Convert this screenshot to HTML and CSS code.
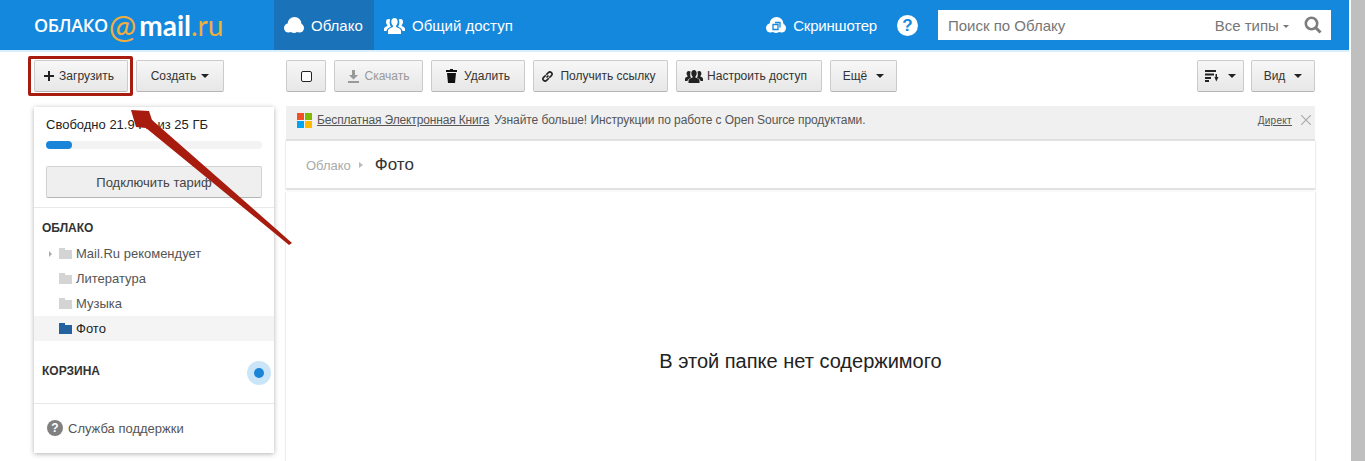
FILE: index.html
```html
<!DOCTYPE html>
<html lang="en">
<head>
    <meta charset="UTF-8">
    <title>Облако Mail.Ru</title>
    <link rel="stylesheet" href="styles.css">
</head>
<body>
    <div class="page">
        <div class="header">
            <div class="logo"><span class="logo-word">ОБЛАКО</span><span class="logo-at">@</span><b>mail</b><span class="logo-ru">.ru</span></div>
            <a class="tab tab-active">
                <svg width="20" height="16" viewBox="0 0 20 16"><circle cx="4.500" cy="11" r="4.500" fill="#fff"/><circle cx="10.500" cy="7" r="7" fill="#fff"/><circle cx="15.500" cy="11" r="4.500" fill="#fff"/><circle cx="10" cy="12.500" r="3.500" fill="#fff"/></svg>
                Облако
            </a>
            <a class="tab">
                <svg width="21" height="17" viewBox="0 0 21 17"><path fill="#fff" d="M10.500 1C8.500 1 7.300 2.500 7.300 4.700c0 1.700.7 3.100 1.600 3.900v1.300C6.500 10.700 4 11.800 4 13.500V17h13v-3.500c0-1.700-2.500-2.800-4.900-3.600V8.600c.9-.8 1.600-2.200 1.600-3.900C13.700 2.500 12.500 1 10.500 1zM4.500 2C3 2 2 3.200 2 5c0 1.300.6 2.400 1.300 3v1C1.500 9.600 0 10.500 0 11.800V14h2.600c.2-2 2-3.200 4.400-4.200-.7-.9-1.100-2-1.300-3.200C5.600 5 5.800 3.500 6.300 2.600 5.900 2.200 5.200 2 4.500 2zm12 0c-.7 0-1.400.2-1.800.6.5.9.7 2.400.6 4-.2 1.200-.6 2.300-1.300 3.200 2.400 1 4.200 2.200 4.400 4.200H21v-2.200c0-1.300-1.500-2.200-3.300-2.800V8c.7-.6 1.300-1.700 1.300-3 0-1.800-1-3-2.500-3z"/></svg>
                Общий доступ
            </a>
            <a class="tab tab-right">
                <svg width="20" height="16" viewBox="0 0 20 16"><circle cx="4.500" cy="11" r="4.500" fill="#fff"/><circle cx="10.500" cy="7" r="7" fill="#fff"/><circle cx="15.500" cy="11" r="4.500" fill="#fff"/><circle cx="10" cy="12.500" r="3.500" fill="#fff"/><path fill="none" stroke="#1488dc" stroke-width="1.300" d="M7 7.500h5v5H7zM9 5.500h5v5"/></svg>
                Скриншотер
            </a>
            <div class="help-round">?</div>
            <div class="search">
                <span class="search-text">Поиск по Облаку</span>
                <span class="search-type">Все типы <i class="caret caret-small"></i></span>
                <svg class="search-icon" width="18" height="18" viewBox="0 0 18 18"><circle cx="7.500" cy="7.500" r="5.700" fill="none" stroke="#7d7d7d" stroke-width="2.600"/><path stroke="#7d7d7d" stroke-width="3" d="M11.500 11.500l5 5"/></svg>
            </div>
        </div>

        <div class="toolbar">
            <div class="toolbar-left">
                <button class="btn btn-upload"><svg width="10" height="10" viewBox="0 0 10 10"><path fill="#222" d="M4 0h2v4h4v2H6v4H4V6H0V4h4z"/></svg>Загрузить</button>
                <button class="btn btn-create">Создать<i class="caret"></i></button>
            </div>
            <button class="btn btn-check"><i class="checkbox"></i></button>
            <button class="btn btn-download btn-disabled"><svg width="11" height="13" viewBox="0 0 11 13"><path fill="#999" d="M4 0h3v5h3L5.500 9.500 1 5h3zM0 11h11v2H0z"/></svg>Скачать</button>
            <button class="btn btn-delete"><svg width="11" height="14" viewBox="0 0 11 14"><path fill="#111" d="M4 0h3v1h4v2H0V1h4zM1 4h9l-1 10H2z"/></svg>Удалить</button>
            <button class="btn btn-link"><svg width="13" height="13" viewBox="0 0 13 13"><path fill="none" stroke="#222" stroke-width="1.600" d="M5.500 7.500l2-2M4.800 5.200L2.600 7.400a2 2 0 0 0 3 3l2.200-2.200M8.200 7.800l2.200-2.200a2 2 0 0 0-3-3L5.200 4.800"/></svg>Получить ссылку</button>
            <button class="btn btn-share"><svg width="18" height="13" viewBox="0 0 18 13"><path fill="#222" d="M9 0C7.300 0 6.300 1.300 6.300 3.200c0 1.400.6 2.600 1.300 3.300v1C5.500 8.200 3.500 9.200 3.500 10.600V13h11v-2.400c0-1.400-2-2.400-4.100-3.100v-1c.7-.7 1.300-1.900 1.300-3.300C11.700 1.300 10.700 0 9 0zM3.600 1C2.400 1 1.600 2 1.600 3.400c0 1 .4 1.900 1 2.400v.8C1.200 7.100 0 7.900 0 8.900V11h2.500c.1-1.300 1.200-2.400 3.500-3.300-.5-.9-.9-2.100-.8-3.500 0-1.100.2-1.800.5-2.500C5.200 1.200 4.500 1 3.600 1zm10.800 0c-.9 0-1.600.2-2.100.7.300.7.500 1.400.5 2.500.1 1.400-.3 2.600-.8 3.500 2.300.9 3.400 2 3.500 3.300H18V8.900c0-1-1.200-1.800-2.600-2.300v-.8c.6-.5 1-1.400 1-2.400C16.400 2 15.600 1 14.400 1z"/></svg>Настроить доступ</button>
            <button class="btn btn-more">Ещё<i class="caret"></i></button>
            <button class="btn btn-sort"><svg width="14" height="12" viewBox="0 0 14 12"><path fill="#222" d="M0 0h11v2H0zM0 3.500h9v2H0zM0 7h6v2H0zM0 10h4v2H0zM9.500 7h1V4h1.500v3h1.500l-2.250 4.500z"/></svg><i class="caret"></i></button>
            <button class="btn btn-view">Вид<i class="caret"></i></button>
        </div>

        <div class="layout">
            <div class="sidebar">
                <div class="quota">
                    <div class="quota-text">Свободно 21.9 ГБ из 25 ГБ</div>
                    <div class="quota-bar"><div class="quota-fill" style="width: 12%"></div></div>
                    <button class="tariff-btn">Подключить тариф</button>
                </div>
                <div class="tree">
                    <div class="tree-title">ОБЛАКО</div>
                    <div class="tree-row"><i class="tree-arrow"></i><i class="folder"></i>Mail.Ru рекомендует</div>
                    <div class="tree-row"><i class="folder"></i>Литература</div>
                    <div class="tree-row"><i class="folder"></i>Музыка</div>
                    <div class="tree-row tree-row-active"><i class="folder folder-active"></i>Фото</div>
                </div>
                <div class="trash">
                    <div class="tree-title">КОРЗИНА</div>
                    <div class="pulse"><i></i></div>
                </div>
                <div class="support"><span class="support-icon">?</span>Служба поддержки</div>
            </div>

            <div class="content">
                <div class="banner">
                    <svg class="ms-logo" width="15" height="15" viewBox="0 0 15 15"><path fill="#f25022" d="M0 0h7v7H0z"/><path fill="#7fba00" d="M8 0h7v7H8z"/><path fill="#00a4ef" d="M0 8h7v7H0z"/><path fill="#ffb900" d="M8 8h7v7H8z"/></svg>
                    <a class="banner-link">Бесплатная Электронная Книга</a>
                    <span class="banner-text">Узнайте больше! Инструкции по работе с Open Source продуктами.</span>
                    <a class="banner-direct">Директ</a>
                    <svg width="10" height="10" viewBox="0 0 10 10"><path stroke="#aaa" stroke-width="1.200" d="M0 0l10 10M10 0L0 10"/></svg>
                </div>
                <div class="crumbs">
                    <span class="crumb">Облако</span>
                    <i class="crumb-arrow"></i>
                    <span class="crumb-current">Фото</span>
                </div>
                <div class="empty">В этой папке нет содержимого</div>
            </div>
        </div>
    </div>
    <div class="scroll-gap"></div>
    <div class="scrollbar"></div>

    <!-- red marks drawn over the screenshot -->
    <div class="mark-box"></div>
    <svg class="mark-arrow" width="300" height="250" viewBox="0 0 300 250"><path fill="#a81c10" d="M131 110L149 111 152 120 292 243 289 245 146 128 136 127z"/></svg>
</body>
</html>
```

FILE: styles.css
```css
html, body {
    margin: 0;
    height: 100%;
    overflow: hidden;
}
body {
    font-family: "Liberation Sans", Arial, sans-serif;
    background-color: white;
    color: #333;
    display: flex;
}
.page {
    width: 1349px;
    display: flex;
    flex-direction: column;
    height: 461px;
    overflow: hidden;
}
.scroll-gap {
    width: 2px;
}
.scrollbar {
    width: 14px;
    background-color: #bfbfbf;
}

/* header */
.header {
    height: 50px;
    flex: none;
    display: flex;
    align-items: center;
    background-color: #1488dc;
    border-bottom: 2px solid #d9effb;
    color: white;
}
.logo {
    width: 274px;
    height: 50px;
    flex: none;
    padding-left: 34px;
    box-sizing: border-box;
    display: flex;
    align-items: center;
    white-space: nowrap;
    font-family: "Lato", sans-serif;
}
.logo-word {
    font-family: "Open Sans", sans-serif;
    font-size: 18px;
    font-weight: 600;
    letter-spacing: -0.4px;
    margin-right: 1px;
}
.logo b {
    font-size: 28px;
    font-weight: 700;
    margin-left: 3px;
}
.logo-at {
    color: #f0ae3c;
    font-size: 33px;
}
.logo-ru {
    color: #f0ae3c;
    font-size: 28px;
}
.tab {
    height: 50px;
    display: flex;
    align-items: center;
    gap: 7px;
    padding: 0 10px;
    font-size: 15px;
    color: white;
}
.tab-active {
    background-color: #1a72b9;
    width: 100px;
    box-sizing: border-box;
}
.tab-right {
    margin-left: auto;
    padding: 0;
    letter-spacing: -0.2px;
}
.help-round {
    width: 21px;
    height: 21px;
    margin: 0 20px;
    border-radius: 50%;
    background-color: white;
    color: #1488dc;
    font-size: 17px;
    font-weight: bold;
    line-height: 21px;
    text-align: center;
}
.search {
    width: 393px;
    height: 30px;
    margin-right: 18px;
    padding: 0 9px 0 10px;
    box-sizing: border-box;
    display: flex;
    align-items: center;
    background-color: white;
    font-size: 15px;
    color: #777;
}
.search-text {
    flex: 1;
}
.search-type {
    margin-right: 15px;
}
.search-icon {
    display: block;
}

/* toolbar */
.toolbar {
    flex: none;
    display: flex;
    gap: 8px;
    padding: 8px 0 0 34px;
    height: 32px;
}
.toolbar-left {
    width: 244px;
    display: flex;
    gap: 8px;
}
.btn {
    height: 32px;
    padding: 0;
    box-sizing: border-box;
    display: flex;
    align-items: center;
    justify-content: center;
    gap: 6px;
    border: 1px solid #cbcbcb;
    border-bottom-color: #b5b5b5;
    border-radius: 2px;
    background: linear-gradient(#f7f7f7, #e7e7e7);
    font-family: "Liberation Sans", Arial, sans-serif;
    font-size: 12px;
    color: #333;
}
.btn-upload { width: 94px; padding-right: 4px; gap: 5px; }
.btn-create { width: 88px; }
.btn-create .caret { margin-left: -1px; }
.btn-check { width: 40px; }
.btn-download { width: 89px; }
.btn-delete { width: 94px; gap: 7px; }
.btn-link { width: 135px; padding-right: 4px; }
.btn-share { width: 146px; gap: 4px; padding-right: 6px; }
.btn-more { width: 67px; }
.btn-sort { width: 47px; margin-left: 292px; }
.btn-view { width: 64px; margin-left: -1px; }
.btn-disabled {
    color: #999;
}
.caret {
    display: inline-block;
    margin-left: 3px;
    border-top: 4px solid #222;
    border-left: 4px solid transparent;
    border-right: 4px solid transparent;
}
.caret-small {
    margin-left: 0;
    vertical-align: middle;
    border-top: 3px solid #777;
    border-left-width: 3px;
    border-right-width: 3px;
}
.checkbox {
    width: 9px;
    height: 9px;
    border: 1px solid #222;
    border-radius: 2px;
    background-color: white;
}

/* left column */
.layout {
    flex: 1;
    display: flex;
    gap: 12px;
    padding: 14px 34px 0 34px;
    min-height: 0;
}
.sidebar {
    width: 240px;
    height: 346px;
    margin-top: 1px;
    flex: none;
    background-color: white;
    box-shadow: 0 1px 5px rgba(0, 0, 0, 0.3);
    font-size: 13px;
}
.quota {
    height: 101px;
    padding: 10px 12px 0;
    border-bottom: 1px solid #e8e8e8;
    box-sizing: border-box;
}
.quota-text {
    line-height: 15px;
    color: #222;
}
.quota-bar {
    height: 8px;
    margin-top: 9px;
    border-radius: 4px;
    background-color: #f3f3f3;
}
.quota-fill {
    height: 8px;
    border-radius: 4px;
    background-color: #1a84d8;
}
.tariff-btn {
    width: 216px;
    height: 32px;
    margin-top: 17px;
    border: 1px solid #d2d2d2;
    border-bottom-color: #b5b5b5;
    border-radius: 2px;
    background-color: #efefef;
    font-family: "Liberation Sans", Arial, sans-serif;
    font-size: 13px;
    color: #444;
}
.tree {
    padding-top: 12px;
}
.tree-title {
    padding-left: 8px;
    font-size: 12px;
    font-weight: bold;
    line-height: 16px;
    color: #333;
}
.tree-row {
    position: relative;
    height: 25px;
    display: flex;
    align-items: center;
    padding-left: 25px;
    color: #555;
}
.tree-title + .tree-row {
    margin-top: 5px;
}
.tree-row-active {
    background-color: #f4f4f4;
    color: #222;
}
.tree-arrow {
    position: absolute;
    left: 15px;
    top: 10px;
    border-left: 3px solid #aaa;
    border-top: 3px solid transparent;
    border-bottom: 3px solid transparent;
}
.folder {
    position: relative;
    width: 13px;
    height: 9px;
    margin-right: 4px;
    margin-top: 1px;
    background-color: #d4d4d4;
}
.folder::before {
    content: "";
    position: absolute;
    left: 0;
    top: -2px;
    width: 6px;
    height: 2px;
    background-color: #d4d4d4;
}
.folder-active,
.folder-active::before {
    background-color: #24619f;
}
.trash {
    height: 60px;
    display: flex;
    align-items: center;
    justify-content: space-between;
    padding: 0 3px 2px 0;
    border-bottom: 1px solid #e8e8e8;
}
.pulse {
    width: 24px;
    height: 24px;
    margin-top: 4px;
    display: flex;
    align-items: center;
    justify-content: center;
    border-radius: 50%;
    background-color: #cbe5f8;
}
.pulse i {
    width: 10px;
    height: 10px;
    border-radius: 50%;
    background-color: #1a84d8;
}
.support {
    display: flex;
    align-items: center;
    gap: 5px;
    padding: 16px 0 0 13px;
    color: #555;
}
.support-icon {
    width: 16px;
    height: 16px;
    border-radius: 50%;
    background-color: #808080;
    color: white;
    font-size: 12px;
    font-weight: bold;
    line-height: 16px;
    text-align: center;
}

/* right column */
.content {
    flex: 1;
    display: flex;
    flex-direction: column;
}
.banner {
    height: 35px;
    flex: none;
    display: flex;
    align-items: center;
    padding: 0 4px 5px 11px;
    box-sizing: border-box;
    background-color: #f0f0f0;
    border-bottom: 2px solid #dedede;
    font-size: 12px;
    color: #555;
}
.ms-logo {
    margin-right: 5px;
}
.banner-link {
    text-decoration: underline;
    letter-spacing: -0.14px;
    margin-right: 5px;
}
.banner-text {
    flex: 1;
    letter-spacing: -0.07px;
}
.banner-direct {
    font-size: 10px;
    letter-spacing: 0.3px;
    text-decoration: underline;
    margin-right: 9px;
}
.crumbs {
    height: 49px;
    flex: none;
    display: flex;
    align-items: center;
    box-sizing: border-box;
    padding: 1px 0 0 20px;
    border-bottom: 2px solid #e2e2e2;
    box-shadow: 1px 0 1px #eee, -1px 0 1px #eee;
}
.crumb {
    font-size: 13px;
    color: #aaa;
}
.crumb-arrow {
    margin: 0 12px 0 8px;
    border-left: 4px solid #bbb;
    border-top: 3px solid transparent;
    border-bottom: 3px solid transparent;
}
.crumb-current {
    font-size: 17px;
    color: #333;
}
.empty {
    flex: 1;
    margin-top: 2px;
    padding-top: 158px;
    text-align: center;
    font-size: 20px;
    line-height: 22px;
    color: #222;
    box-shadow: 1px 0 1px #eee, -1px 0 1px #eee;
}

/* red marks */
.mark-box {
    position: absolute;
    left: 28px;
    top: 56px;
    width: 99px;
    height: 34px;
    border: 3px solid #a81c10;
    border-radius: 2px;
}
.mark-arrow {
    position: absolute;
    left: 0;
    top: 0;
}
```
